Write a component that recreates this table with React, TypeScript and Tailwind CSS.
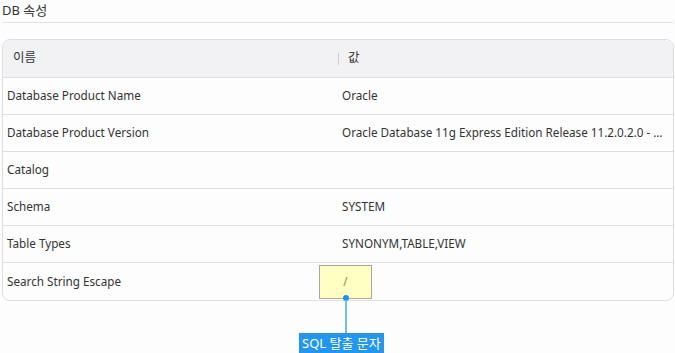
const rows: [string, string][] = [
  ['Database Product Name', 'Oracle'],
  ['Database Product Version', 'Oracle Database 11g Express Edition Release 11.2.0.2.0 - 64bit Production'],
  ['Catalog', ''],
  ['Schema', 'SYSTEM'],
  ['Table Types', 'SYNONYM,TABLE,VIEW'],
  ['Search String Escape', '/'],
];

export default function App() {
  return (
    <div
      className="h-[353px] w-[675px] overflow-hidden bg-[#fdfdfd] text-[#333]"
      style={{ fontFamily: '"Noto Sans", "Noto Sans CJK KR", sans-serif' }}
    >
      <div className="mx-[2px] border-b border-[#e2e2e2] pb-[3px] pt-[2px] text-[13px] leading-[17px]">DB 속성</div>

      <div className="ml-[2px] mr-[1px] mt-[16px] rounded-[8px] border border-[#dedede] text-[11.7px]">
        <div className="flex h-[38px] items-center rounded-t-[8px] border-b border-[#dedede] bg-[#f2f2f4] text-[12.5px]">
          <div className="w-[335px] pl-[10px]">이름</div>
          <div className="flex items-center">
            <span className="h-[12px] w-px bg-[#cfcfcf]" />
            <span className="pl-[9px]">값</span>
          </div>
        </div>
        {rows.map(([name, value], i) => (
          <div
            key={name}
            className={`flex h-[37px] items-center ${i < rows.length - 1 ? 'border-b border-[#dedede]' : ''}`}
          >
            <div className="w-[339px] shrink-0 pl-[4px]">{name}</div>
            {i === rows.length - 1 ? (
              <div className="relative ml-[-23px] flex h-[34px] w-[53px] items-center justify-center border border-[#aaa89a] bg-[#ffffc4] text-[#a08040]">
                {value}
                <span className="absolute bottom-[-3px] left-[23px] h-[6px] w-[6px] rounded-full bg-[#1e90f0]" />
                <span className="absolute left-[25px] top-[34px] h-[34px] w-[2px] bg-[#7ab8f0]" />
                <span className="absolute left-[-21px] top-[67px] whitespace-nowrap bg-[#2196f3] px-[3px] text-[13px] leading-[21px] text-white">
                  SQL 탈출 문자
                </span>
              </div>
            ) : (
              <div className="min-w-0 flex-1 truncate pr-[6px]">{value}</div>
            )}
          </div>
        ))}
      </div>
    </div>
  );
}
